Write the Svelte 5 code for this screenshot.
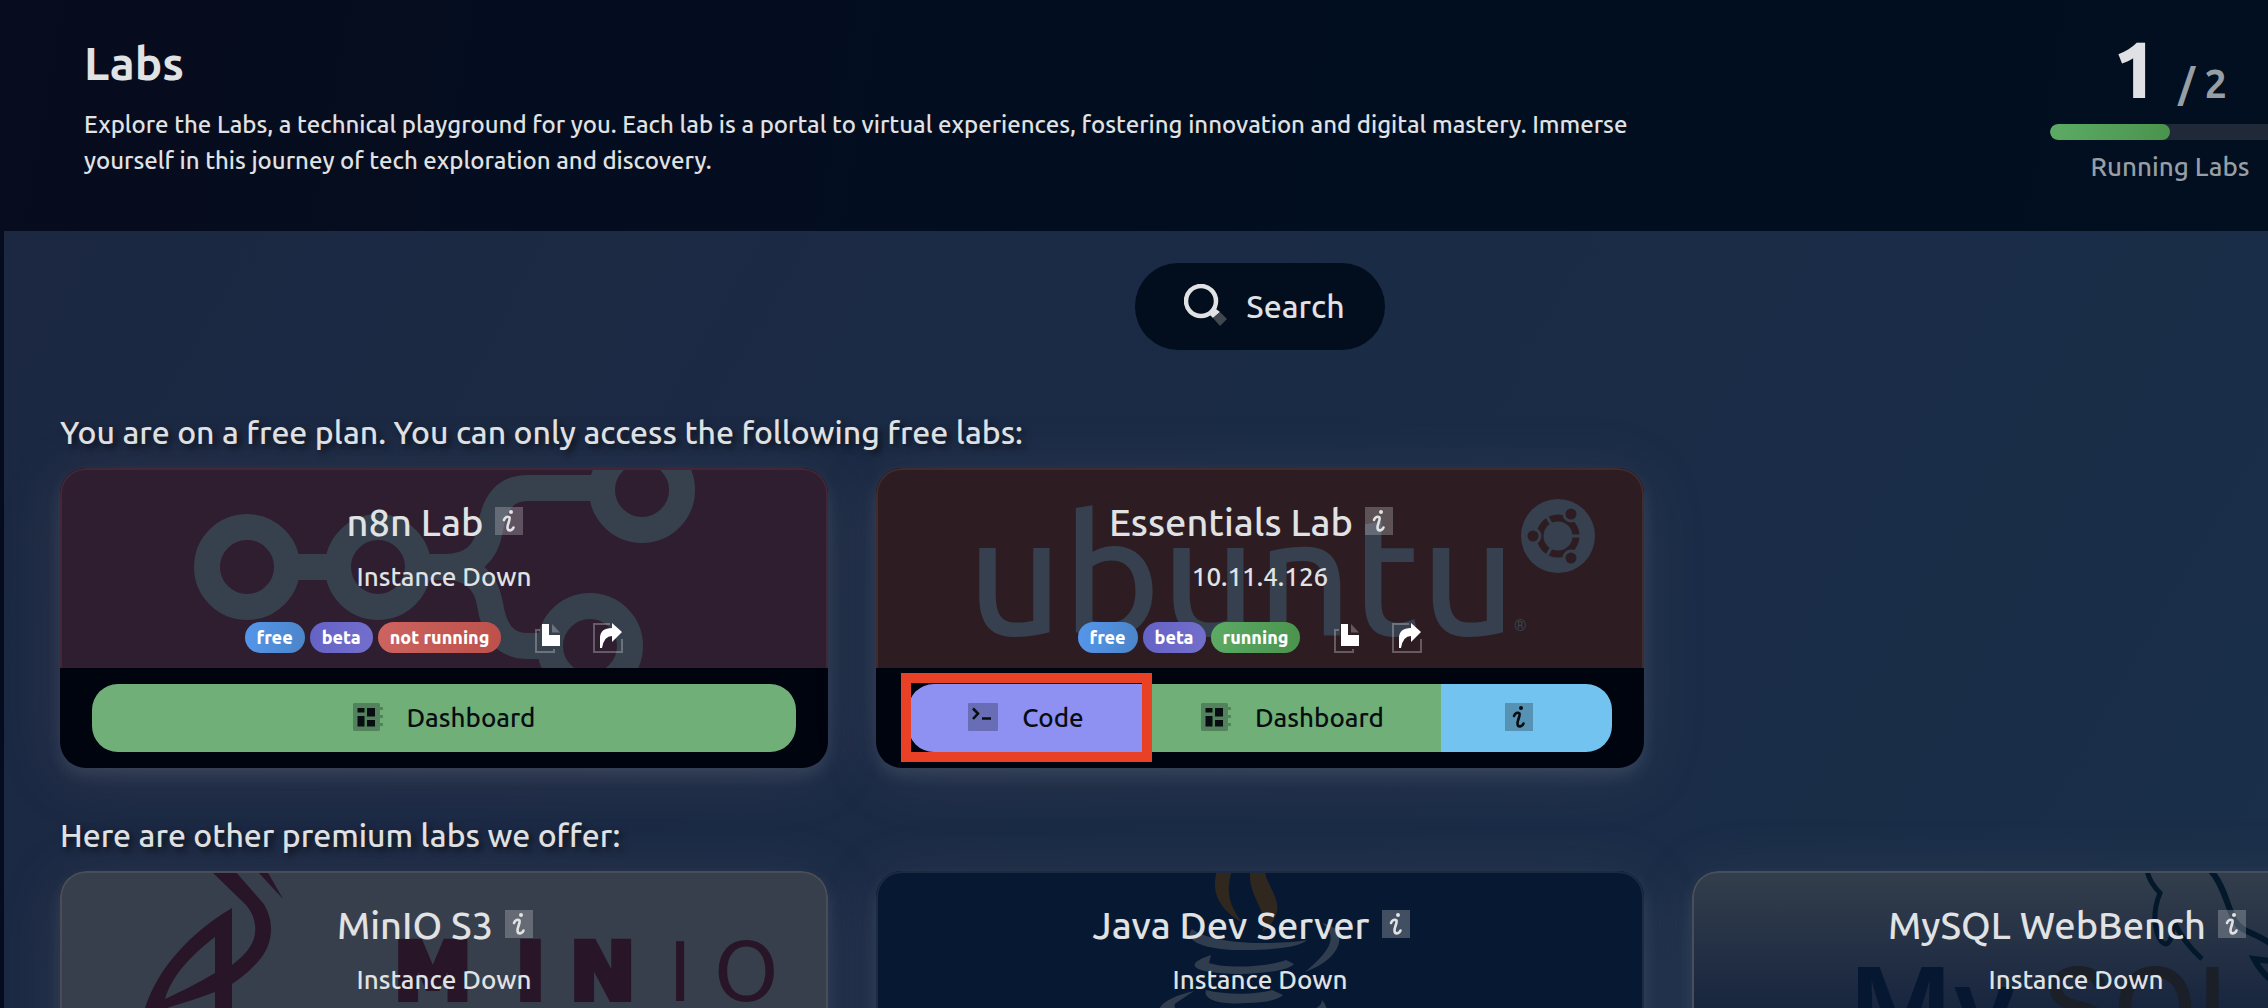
<script>
  const running = 1;
  const limit = 2;

  const freeLabs = [
    { name: "n8n Lab", logo: "n8n", status: "Instance Down", up: false },
    { name: "Essentials Lab", logo: "ubuntu", status: "10.11.4.126", up: true },
  ];

  const premiumLabs = [
    { name: "MinIO S3", logo: "minio", status: "Instance Down", up: false },
    { name: "Java Dev Server", logo: "java", status: "Instance Down", up: false },
    { name: "MySQL WebBench", logo: "mysql", status: "Instance Down", up: false },
  ];
</script>

{#snippet infoIcon()}
  <svg class="icon" width="28" height="28" viewBox="0 0 28 28">
    <rect width="28" height="28" fill="currentColor" opacity="0.27" />
    <circle cx="16" cy="5" r="2" fill="currentColor" />
    <path d="M9 13C10 10 13 9 14.500 10.500C15.500 12.500 12 18 12.500 21C13 24.500 17 24 18.500 20.500" fill="none" stroke="currentColor" stroke-width="2.600" stroke-linecap="round" />
  </svg>
{/snippet}

{#snippet dashboardIcon()}
  <svg class="icon" width="30" height="28" viewBox="0 0 30 28">
    <path d="M1.500 0H25.500Q27 0 27 1.500V4H30V7H27V12H30V15H27V20H30V23H27V26.500Q27 28 25.500 28H1.500Q0 28 0 26.500V1.500Q0 0 1.500 0Z" fill="currentColor" opacity="0.27" />
    <path d="M4.500 5h7v4.500h-7zM4.500 13h7v10.500h-7zM14 5h8v8.500H14zM14 17h8v6.500H14z" fill="currentColor" />
  </svg>
{/snippet}

{#snippet codeIcon()}
  <svg class="icon" width="30" height="28" viewBox="0 0 30 28">
    <rect width="30" height="28" rx="1" fill="currentColor" opacity="0.27" />
    <path d="M5 5.500L10 10.500L5 16M14 15.500H23" fill="none" stroke="currentColor" stroke-width="2.600" />
  </svg>
{/snippet}

{#snippet logo(name)}
  <svg class="logo" viewBox="0 0 768 200" preserveAspectRatio="xMidYMin slice" aria-hidden="true">
    {#if name === "n8n"}
      <g fill="none" stroke="#37404d" stroke-width="26">
        <circle cx="187" cy="99" r="40" />
        <circle cx="318" cy="99" r="40" />
        <circle cx="582" cy="22" r="40" />
        <circle cx="530" cy="178" r="40" />
        <path d="M236 99H270M366 99H385C412 99 426 85 430 62C434 35 445 20 468 20H532" />
        <path d="M385 99C412 99 426 113 430 136C434 163 445 178 468 178H482" />
      </g>
    {:else if name === "ubuntu"}
      <text x="91" y="167" font-family="Ubuntu, Roboto, sans-serif" font-size="166" font-weight="500" fill="#36404e">ubuntu</text>
      <text x="638" y="163" font-family="Roboto" font-size="16" fill="#36404e">®</text>
      <circle cx="682" cy="68" r="37" fill="#36404e" />
      <circle cx="682" cy="68" r="18" fill="none" stroke="#2d1d22" stroke-width="7" />
      <path d="M682 68H706M682 68L670 47M682 68L670 89" stroke="#36404e" stroke-width="3" />
      <circle cx="682" cy="68" r="14" fill="#36404e" />
      <g fill="#2d1d22" stroke="#36404e" stroke-width="3">
        <circle cx="657" cy="68" r="7" />
        <circle cx="695" cy="46" r="7" />
        <circle cx="695" cy="90" r="7" />
      </g>
    {:else if name === "minio"}
      <g fill="#281628">
        <path d="M197 0H207L223 28Z" />
        <path fill-rule="evenodd" d="M151 0H175L203 32C214 48 214 70 201 87C192 98 184 105 172 113V200H155V121C140 127 122 132 107 137C98 160 92 180 90 200H72C72 180 76 158 85 137C98 97 130 62 172 37V94C188 82 197 70 195 54C194 44 189 38 186 34ZM155 66C130 85 112 105 105 128C122 120 140 111 155 102Z" />
        <text y="128" font-family="DejaVu Sans" font-size="78"><tspan class="heavy" x="334">M</tspan><tspan class="heavy" x="456">I</tspan><tspan class="heavy" x="510">N</tspan></text>
        <text y="130" font-family="DejaVu Sans" font-size="82"><tspan x="608">I</tspan><tspan x="654">O</tspan></text>
      </g>
    {:else if name === "java"}
      <g fill="#30271f">
        <path d="M341 0H356C350 18 352 34 366 51C345 40 334 22 341 0Z" />
        <path d="M374 0H389C390 14 406 28 400 44C397 52 392 57 386 61C394 40 372 28 374 0Z" />
      </g>
      <g fill="#303d4e">
        <path d="M316 58C306 70 330 80 369 79C398 79 424 76 431 69C410 73 340 76 316 58Z" />
        <path d="M446 52C475 57 467 88 429 101C452 82 464 66 446 52Z" />
        <path d="M335 84C302 95 322 103 366 103C394 102 412 99 418 93L410 89C392 96 350 98 333 92Z" />
        <path d="M330 119C326 130 348 134 371 132C388 132 402 129 407 124L396 119C378 124 350 124 330 119Z" />
        <path d="M318 120C290 126 270 140 292 152C330 165 410 163 444 150C456 144 450 134 446 129C446 138 430 146 380 147C330 148 290 142 300 132Z" />
      </g>
    {:else}
      <text x="158" y="176" font-family="Inter" font-size="110" font-weight="600" fill="#061732">My</text>
      <text x="350" y="176" font-family="Inter" font-size="110" font-weight="500" fill="#1b1f28">SQL</text>
      <g fill="none" stroke="#04182b" stroke-width="5">
        <path d="M455 0Q458 12 468 22Q462 36 463 52Q466 72 474 73Q480 72 482 50Q490 70 510 88" />
        <path d="M519 0C532 14 536 38 543 50C550 62 566 62 580 74Q592 86 594 92L562 88Q568 100 580 110" stroke-width="6" />
      </g>
    {/if}
  </svg>
{/snippet}

{#snippet labCard(lab)}
  <article class="card">
    <div class="card-top {lab.logo}">
      {@render logo(lab.logo)}
      <h3>
        {lab.name}
        <button class="plain" aria-label="About {lab.name}">{@render infoIcon()}</button>
      </h3>
      <p class="status">{lab.status}</p>
      <div class="meta">
        <span class="badge free">free</span>
        <span class="badge beta">beta</span>
        {#if lab.up}
          <span class="badge up">running</span>
        {:else}
          <span class="badge down">not running</span>
        {/if}
        <button class="plain copy" aria-label="Copy address">
          <svg class="icon" width="26" height="30" viewBox="0 0 26 30">
            <path d="M5 7H1V29H19V26" fill="none" stroke="#fff" stroke-width="2" opacity="0.27" />
            <path d="M17 1L25 9.500H17Z" fill="#fff" opacity="0.27" />
            <path d="M7 1H14V12H25V23H7Z" fill="#fff" />
          </svg>
        </button>
        <button class="plain share" aria-label="Share lab">
          <svg class="icon" width="30" height="30" viewBox="0 0 30 30">
            <path d="M17 1H1V29H29V16" fill="none" stroke="#fff" stroke-width="2" opacity="0.27" />
            <path d="M7 25V15Q7 5 19 5V0L29 9L19 19V13Q11 13 9 25Z" fill="#fff" />
          </svg>
        </button>
      </div>
    </div>
    <div class="actions" class:split={lab.up}>
      {#if lab.up}
        <button class="action code">{@render codeIcon()}Code<span class="mark"></span></button>
      {/if}
      <button class="action dashboard">{@render dashboardIcon()}Dashboard</button>
      {#if lab.up}
        <button class="action info" aria-label="Lab details">{@render infoIcon()}</button>
      {/if}
    </div>
  </article>
{/snippet}

<div class="page">
  <header>
    <div class="intro">
      <h1>Labs</h1>
      <p>
        Explore the Labs, a technical playground for you. Each lab is a portal to virtual experiences,
        fostering innovation and digital mastery. Immerse yourself in this journey of tech exploration
        and discovery.
      </p>
    </div>
    <div class="usage">
      <div class="count"><strong>{running}</strong><span>/ {limit}</span></div>
      <div class="track"><div class="fill" style="width: {(running / limit) * 100}%"></div></div>
      <div class="caption">Running Labs</div>
    </div>
  </header>

  <main>
    <button class="search">
      <svg class="icon" width="44" height="44" viewBox="0 0 44 44">
        <circle cx="17" cy="17" r="15" fill="none" stroke="currentColor" stroke-width="4.500" />
        <path d="M26 31L28 26L32 25L36 28L29 34Z" fill="currentColor" />
        <path d="M29 34L36 28L43 35L36 42Z" fill="#40474f" />
      </svg>
      Search
    </button>

    <h2>You are on a free plan. You can only access the following free labs:</h2>
    <section class="labs">
      {#each freeLabs as lab}
        {@render labCard(lab)}
      {/each}
    </section>

    <h2>Here are other premium labs we offer:</h2>
    <section class="labs">
      {#each premiumLabs as lab}
        {@render labCard(lab)}
      {/each}
    </section>
  </main>
</div>

<style>
  :global(body) {
    overflow: hidden;
    background: #050c1f;
  }

  .page {
    /* the third column runs past the right edge of the window */
    width: calc(100% + 248px);
    height: 100vh;
    overflow: hidden;
    box-sizing: border-box;
    font-family: Ubuntu, "Noto Sans", sans-serif;
    font-size: 26px;
    font-weight: 500;
    color: #e0e2e4;
  }

  h1, h2, h3, p {
    margin: 0;
  }

  button {
    border: 0;
    font: inherit;
    color: inherit;
    cursor: pointer;
  }

  .icon {
    display: block;
    flex: none;
  }

  header {
    display: flex;
    justify-content: space-between;
    align-items: flex-start;
    box-sizing: border-box;
    min-height: 231px;
    padding: 35px 226px 0 84px;
    background: linear-gradient(100deg, #070c1e, #020e20 40%, #010f1f);
  }

  .intro {
    width: 1560px;
  }

  h1 {
    font-size: 46px;
    font-weight: 700;
    line-height: 56px;
    margin-bottom: 16px;
  }

  .intro p {
    font-size: 24px;
    line-height: 36px;
  }

  .usage {
    width: 240px;
    text-align: center;
    color: #989ea5;
  }

  .count {
    display: flex;
    justify-content: center;
    align-items: baseline;
    gap: 20px;
    height: 89px;
    line-height: 66px;
    font-size: 40px;
    font-weight: 700;
  }

  .count strong {
    font-size: 80px;
    font-weight: 800;
    color: #e0e1e5;
  }

  .track {
    height: 16px;
    border-radius: 8px;
    background: #1f2937;
    overflow: hidden;
  }

  .fill {
    height: 100%;
    border-radius: 8px;
    background: linear-gradient(100deg, #5cab65, #4a934d);
  }

  .caption {
    margin-top: 9px;
    line-height: 36px;
  }

  main {
    display: flex;
    flex-direction: column;
    margin-left: 4px;
    padding: 32px 56px;
    background: linear-gradient(120deg, #1c2842, #1a2c47 60%, #19304a);
  }

  .search {
    display: flex;
    align-items: center;
    align-self: center;
    gap: 18px;
    height: 87px;
    margin-bottom: 60px;
    padding: 0 40px 2px 49px;
    border-radius: 44px;
    font-size: 32px;
    background: #020d1e;
  }

  h2 {
    font-size: 32px;
    font-weight: 500;
    line-height: 44px;
    margin-bottom: 14px;
    text-shadow: 4px 4px 6px rgba(0, 0, 0, 0.6);
  }

  .labs {
    display: grid;
    grid-template-columns: repeat(3, 1fr);
    gap: 48px;
    margin-bottom: 45px;
  }

  .card {
    border-radius: 26px;
    background: #00040f;
    box-shadow: 0 8px 16px rgba(180, 190, 190, 0.13), 0 8px 64px rgba(140, 120, 130, 0.16);
  }

  .card-top {
    position: relative;
    display: flex;
    flex-direction: column;
    align-items: center;
    box-sizing: border-box;
    height: 200px;
    padding-top: 26px;
    border: 2px solid;
    border-bottom: 0;
    border-radius: 26px 26px 0 0;
    overflow: hidden;
  }

  .n8n {
    background-color: #2f1d30;
    border-color: #442736;
  }

  .ubuntu {
    background-color: #2d1d22;
    border-color: #422b2d;
  }

  .minio {
    background-color: #383f4c;
    border-color: #484d58;
  }

  .java {
    background-color: #071932;
    border-color: #1c2a42;
  }

  .mysql {
    background: linear-gradient(#333e4c, #15233d 75%);
    border-color: #484f5c;
  }

  .logo {
    position: absolute;
    inset: -2px;
    width: calc(100% + 4px);
    height: calc(100% + 2px);
  }

  .heavy {
    font-weight: 700;
    stroke: #281628;
    stroke-width: 6px;
  }

  h3, .status, .meta {
    position: relative;
  }

  h3 {
    display: flex;
    gap: 12px;
    padding-right: 18px;
    font-size: 38px;
    font-weight: 500;
    line-height: 52px;
  }

  .plain {
    padding: 0;
    background: none;
  }

  h3 .plain {
    align-self: flex-start;
    margin-top: 11px;
  }

  .status {
    margin-top: 11px;
    line-height: 36px;
  }

  .meta {
    display: flex;
    align-items: center;
    gap: 5px;
    margin-top: 27px;
    padding-right: 20px;
  }

  .badge {
    padding: 0 12px;
    border-radius: 16px;
    font-size: 18px;
    font-weight: 800;
    line-height: 31px;
    color: #fff;
  }

  .free {
    background: linear-gradient(100deg, #5596ec, #4b85c8);
  }

  .beta {
    background: linear-gradient(100deg, #6562c6, #726fcc);
  }

  .up {
    background: linear-gradient(100deg, #5cab65, #4a934d);
  }

  .down {
    background: linear-gradient(100deg, #cd645f, #bd504b);
  }

  .copy {
    margin-left: 29px;
  }

  .share {
    margin-left: 27px;
  }

  .actions {
    display: grid;
    padding: 16px 32px;
  }

  .split {
    grid-template-columns: 244fr 289fr 171fr;
  }

  .action {
    position: relative;
    display: flex;
    justify-content: center;
    align-items: center;
    gap: 24px;
    height: 68px;
    padding: 0 0 2px;
    color: #080d12;
  }

  .action:first-child {
    border-top-left-radius: 26px;
    border-bottom-left-radius: 26px;
  }

  .action:last-child {
    border-top-right-radius: 26px;
    border-bottom-right-radius: 26px;
  }

  .code {
    padding-right: 8px;
    background: #8e91f2;
  }

  .dashboard {
    background: #70af78;
  }

  .split .dashboard {
    padding-right: 8px;
  }

  .info {
    padding-right: 16px;
    background: #72c3f0;
  }

  .mark {
    position: absolute;
    inset: -11px 0 -10px -7px;
    border: 10px solid #e94126;
  }
</style>
